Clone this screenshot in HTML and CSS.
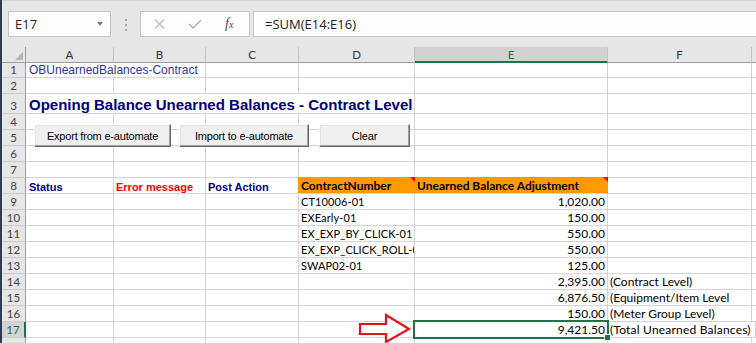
FILE: index.html
```html
<!DOCTYPE html>
<html lang="en">

<head>
    <meta charset="UTF-8">
    <meta name="viewport" content="width=device-width, initial-scale=1.0">
    <title>OBUnearnedBalances-Contract</title>
    <link rel="stylesheet" href="styles.css">
</head>

<body>
    <div class="app">
        <div class="formula-bar">
            <div class="name-box">E17<span class="drop"></span></div>
            <div class="grip"><i></i><i></i><i></i></div>
            <div class="fx-box">
                <svg class="cancel" width="11" height="10" viewBox="0 0 11 10">
                    <path d="M1 0.5 L10 9.5 M10 0.5 L1 9.5" stroke="#b8b8b8" stroke-width="1.1" fill="none" />
                </svg>
                <svg class="enter" width="14" height="10" viewBox="0 0 14 10">
                    <path d="M1 5 L5 9 L13 1" stroke="#b8b8b8" stroke-width="1.6" fill="none" />
                </svg>
                <span class="fx">f<small>x</small></span>
            </div>
            <div class="formula">=SUM(E14:E16)</div>
        </div>

        <div class="sheet">
            <div class="row head">
                <div class="corner"><span></span></div>
                <div class="ch">A</div>
                <div class="ch">B</div>
                <div class="ch">C</div>
                <div class="ch">D</div>
                <div class="ch sel">E</div>
                <div class="ch">F</div>
                <div class="ch"></div>
            </div>
            <div class="row short">
                <div class="rh">1</div>
                <div class="c a span2 doc-name">OBUnearnedBalances-Contract</div>
                <div class="c"></div>
                <div class="c"></div>
                <div class="c"></div>
                <div class="c"></div>
                <div class="c"></div>
            </div>
            <div class="row">
                <div class="rh">2</div>
                <div class="c"></div>
                <div class="c"></div>
                <div class="c"></div>
                <div class="c"></div>
                <div class="c"></div>
                <div class="c"></div>
                <div class="c"></div>
            </div>
            <div class="row tall">
                <div class="rh">3</div>
                <div class="c a span4 title">Opening Balance Unearned Balances - Contract Level</div>
                <div class="c"></div>
                <div class="c"></div>
                <div class="c"></div>
            </div>
            <div class="row">
                <div class="rh">4</div>
                <div class="c"></div>
                <div class="c"></div>
                <div class="c"></div>
                <div class="c"></div>
                <div class="c"></div>
                <div class="c"></div>
                <div class="c"></div>
            </div>
            <div class="row">
                <div class="rh">5</div>
                <div class="c"></div>
                <div class="c"></div>
                <div class="c"></div>
                <div class="c"></div>
                <div class="c"></div>
                <div class="c"></div>
                <div class="c"></div>
            </div>
            <div class="row">
                <div class="rh">6</div>
                <div class="c"></div>
                <div class="c"></div>
                <div class="c"></div>
                <div class="c"></div>
                <div class="c"></div>
                <div class="c"></div>
                <div class="c"></div>
            </div>
            <div class="row">
                <div class="rh">7</div>
                <div class="c"></div>
                <div class="c"></div>
                <div class="c"></div>
                <div class="c"></div>
                <div class="c"></div>
                <div class="c"></div>
                <div class="c"></div>
            </div>
            <div class="row">
                <div class="rh">8</div>
                <div class="c a label">Status</div>
                <div class="c label error">Error message</div>
                <div class="c label">Post Action</div>
                <div class="c hd first">ContractNumber</div>
                <div class="c hd last">Unearned Balance Adjustment</div>
                <div class="c"></div>
                <div class="c"></div>
            </div>
            <div class="row">
                <div class="rh">9</div>
                <div class="c"></div>
                <div class="c"></div>
                <div class="c"></div>
                <div class="c code">CT10006-01</div>
                <div class="c num">1,020.00</div>
                <div class="c"></div>
                <div class="c"></div>
            </div>
            <div class="row">
                <div class="rh">10</div>
                <div class="c"></div>
                <div class="c"></div>
                <div class="c"></div>
                <div class="c code">EXEarly-01</div>
                <div class="c num">150.00</div>
                <div class="c"></div>
                <div class="c"></div>
            </div>
            <div class="row">
                <div class="rh">11</div>
                <div class="c"></div>
                <div class="c"></div>
                <div class="c"></div>
                <div class="c code">EX_EXP_BY_CLICK-01</div>
                <div class="c num">550.00</div>
                <div class="c"></div>
                <div class="c"></div>
            </div>
            <div class="row">
                <div class="rh">12</div>
                <div class="c"></div>
                <div class="c"></div>
                <div class="c"></div>
                <div class="c code">EX_EXP_CLICK_ROLL-01</div>
                <div class="c num">550.00</div>
                <div class="c"></div>
                <div class="c"></div>
            </div>
            <div class="row">
                <div class="rh">13</div>
                <div class="c"></div>
                <div class="c"></div>
                <div class="c"></div>
                <div class="c code">SWAP02-01</div>
                <div class="c num">125.00</div>
                <div class="c"></div>
                <div class="c"></div>
            </div>
            <div class="row">
                <div class="rh">14</div>
                <div class="c"></div>
                <div class="c"></div>
                <div class="c"></div>
                <div class="c"></div>
                <div class="c num">2,395.00</div>
                <div class="c">(Contract Level)</div>
                <div class="c"></div>
            </div>
            <div class="row">
                <div class="rh">15</div>
                <div class="c"></div>
                <div class="c"></div>
                <div class="c"></div>
                <div class="c"></div>
                <div class="c num">6,876.50</div>
                <div class="c">(Equipment/Item Level</div>
                <div class="c"></div>
            </div>
            <div class="row">
                <div class="rh">16</div>
                <div class="c"></div>
                <div class="c"></div>
                <div class="c"></div>
                <div class="c"></div>
                <div class="c num">150.00</div>
                <div class="c">(Meter Group Level)</div>
                <div class="c"></div>
            </div>
            <div class="row">
                <div class="rh sel">17</div>
                <div class="c"></div>
                <div class="c"></div>
                <div class="c"></div>
                <div class="c"></div>
                <div class="c num">9,421.50</div>
                <div class="c span2 total">(Total Unearned Balances)</div>
            </div>
            <div class="row">
                <div class="rh"></div>
                <div class="c"></div>
                <div class="c"></div>
                <div class="c"></div>
                <div class="c"></div>
                <div class="c"></div>
                <div class="c"></div>
                <div class="c"></div>
            </div>
        </div>

        <!-- floating objects on the sheet -->
        <button class="btn btn-export">Export from e-automate</button>
        <button class="btn btn-import">Import to e-automate</button>
        <button class="btn btn-clear">Clear</button>

        <svg class="arrow" width="54" height="31" viewBox="0 0 54 31">
            <polygon points="2,11 28,11 28,2 51,16 28,29 28,21 2,21" fill="#fff" stroke="#e8111a" stroke-width="2.2" stroke-linejoin="miter" />
        </svg>

        <div class="selection"></div>
        <div class="fill-handle"></div>
    </div>
</body>

</html>
```

FILE: styles.css
```css
body {
    margin: 0px;
    background: #ffffff;
}

.app {
    position: relative;
    width: 756px;
    height: 343px;
    overflow: hidden;
    box-sizing: border-box;
    border-left: 2px solid #2b3d5a;
    font-family: Lato, "Liberation Sans", sans-serif;
    font-size: 12px;
    color: #000000;
}

/* formula bar */

.formula-bar {
    height: 47px;
    box-sizing: border-box;
    background: #e6e6e6;
    border-top: 1px solid #d6d6d6;
    padding-top: 10px;
    display: flex;
    align-items: flex-start;
    font-family: "Open Sans", "Noto Sans", sans-serif;
    font-size: 13px;
    color: #222222;
}

.name-box {
    width: 103px;
    height: 26px;
    margin-left: 6px;
    box-sizing: border-box;
    border: 1px solid #c6c6c6;
    background: #fdfdfd;
    display: flex;
    align-items: center;
    padding-left: 6px;
}

.drop {
    margin-left: auto;
    margin-right: 7px;
    border-top: 4px solid #7a7a7a;
    border-left: 3.5px solid transparent;
    border-right: 3.5px solid transparent;
}

.grip {
    display: flex;
    flex-direction: column;
    gap: 3px;
    margin: 8px 0 0 14px;
}

.grip i {
    display: block;
    width: 2px;
    height: 2px;
    background: #a8a8a8;
}

.fx-box {
    width: 110px;
    height: 26px;
    margin-left: 13px;
    box-sizing: border-box;
    border: 1px solid #c6c6c6;
    background: #fdfdfd;
    display: flex;
    align-items: center;
    padding-left: 13px;
}

.enter {
    margin-left: 23px;
}

.fx {
    margin-left: 23px;
    font-family: "Liberation Serif", serif;
    font-style: italic;
    font-size: 14px;
    color: #4a4a4a;
}

.fx small {
    font-size: 10px;
}

.formula {
    flex: 1;
    height: 26px;
    margin-left: 3px;
    box-sizing: border-box;
    border: 1px solid #c6c6c6;
    border-right: none;
    background: #fdfdfd;
    display: flex;
    align-items: center;
    padding-left: 11px;
}

/* grid */

.row {
    display: grid;
    grid-template-columns: 24px 88px 92px 93px 116px 193px 144px 1fr;
    height: 16px;
}

.row.short {
    height: 15px;
}

.row.tall {
    height: 20px;
}

.c,
.rh,
.ch,
.corner {
    box-sizing: border-box;
    border-right: 1px solid #d4d4d4;
    border-bottom: 1px solid #d4d4d4;
    display: flex;
    align-items: flex-end;
    white-space: nowrap;
    overflow: hidden;
    line-height: 14px;
    padding: 0 2px;
}

.ch,
.corner {
    background: #e6e6e6;
    border-right-color: #c4c4c4;
    border-bottom-color: #9b9b9b;
    justify-content: center;
    align-items: center;
    line-height: 15px;
    font-size: 11.5px;
    color: #333333;
}

.corner {
    border-right-color: #9b9b9b;
    justify-content: flex-end;
    align-items: flex-end;
    padding: 0 2px 2px 0;
}

.corner span {
    width: 0;
    height: 0;
    border-left: 8px solid transparent;
    border-bottom: 8px solid #b5b5b5;
}

.ch.sel {
    background: #d2d2d2;
    color: #217346;
    border-bottom: 2px solid #217346;
}

.rh {
    background: #e6e6e6;
    border-right-color: #9b9b9b;
    border-bottom-color: #cacaca;
    justify-content: center;
    font-size: 11.5px;
    color: #444444;
}

.rh.sel {
    background: #d2d2d2;
    color: #217346;
    border-right: 2px solid #217346;
}

.c.a {
    padding-left: 3px;
}

.span2 {
    grid-column: span 2;
}

.span4 {
    grid-column: span 4;
}

.num {
    justify-content: flex-end;
}

.code {
    font-size: 11px;
    letter-spacing: 0.1px;
}

.total {
    letter-spacing: 0.2px;
}

.doc-name {
    font-family: "Liberation Sans", Arial, sans-serif;
    font-size: 12px;
    line-height: 13px;
    color: #34349e;
}

.title {
    font-family: "Liberation Sans", Arial, sans-serif;
    font-size: 15px;
    font-weight: bold;
    line-height: 16px;
    color: #000080;
    overflow: visible;
}

.label {
    font-family: "Liberation Sans", Arial, sans-serif;
    font-size: 11px;
    font-weight: bold;
    line-height: 12px;
    color: #000080;
}

.label.error {
    color: #ff0000;
}

.hd {
    position: relative;
    overflow: visible;
    background: #ff9900;
    font-weight: bold;
    border-right-color: #ff9900;
}

.hd.first {
    box-shadow: -1px -1px 0 #ff9900;
}

.hd.last {
    box-shadow: 0 -1px 0 #ff9900;
}

.hd::after {
    content: "";
    position: absolute;
    top: -1px;
    right: -1px;
    border-top: 5px solid #ff0000;
    border-left: 5px solid transparent;
}

/* floating objects */

.btn {
    position: absolute;
    top: 124px;
    height: 23px;
    box-sizing: border-box;
    padding: 0;
    background: #f0f0f0;
    border: 1px solid;
    border-color: #ffffff #696969 #696969 #ffffff;
    box-shadow: inset -1px -1px 0 #a0a0a0, inset 1px 1px 0 #e3e3e3;
    font-family: "Liberation Sans", Arial, sans-serif;
    font-size: 11px;
    letter-spacing: -0.2px;
    color: #000000;
}

.btn-export {
    left: 32px;
    width: 137px;
}

.btn-import {
    left: 177px;
    width: 130px;
}

.btn-clear {
    left: 317px;
    width: 91px;
}

.arrow {
    position: absolute;
    left: 356px;
    top: 313px;
}

.selection {
    position: absolute;
    left: 411px;
    top: 320px;
    width: 196px;
    height: 19px;
    box-sizing: border-box;
    border: 2px solid #217346;
}

.fill-handle {
    position: absolute;
    left: 602px;
    top: 334px;
    width: 5px;
    height: 5px;
    background: #217346;
    border: 1px solid #ffffff;
}
```
